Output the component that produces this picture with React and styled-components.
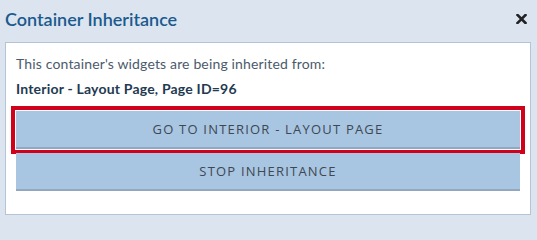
import React from 'react';
import styled, { createGlobalStyle } from 'styled-components';

const GlobalStyle = createGlobalStyle`
  html, body {
    margin: 0;
    padding: 0;
    background: #dbe4ef;
  }
  body {
    font-family: Lato, "Open Sans", sans-serif;
  }
`

const Dialog = styled.div`
  width: 537px;
  height: 221px;
  box-sizing: border-box;
  padding: 0 6px 0 5px;
  display: flex;
  flex-direction: column;
  background: #dbe4ef;
`

const Header = styled.div`
  height: 42px;
  display: flex;
  align-items: center;
  justify-content: space-between;
  padding-bottom: 4px;
  box-sizing: border-box;
`

const Title = styled.h2`
  margin: 0;
  font-family: Lato, sans-serif;
  font-size: 18px;
  font-weight: 600;
  color: #1b5a8e;
`

const Close = styled.button`
  border: 0;
  background: none;
  padding: 0;
  margin-right: 4px;
  width: 12px;
  height: 12px;
  display: flex;
  align-items: center;
  justify-content: center;
  cursor: pointer;
`

const Body = styled.div`
  background: #fff;
  border: 1px solid #b5c3d6;
  height: 173px;
  box-sizing: border-box;
  padding: 10px 10px 0 10px;
  display: flex;
  flex-direction: column;
`

const Note = styled.p`
  margin: 0;
  font-size: 14px;
  letter-spacing: 0.15px;
  line-height: 22px;
  color: #4b5b6c;
`

const Source = styled.p`
  margin: 3px 0 0 0;
  font-size: 14px;
  letter-spacing: 0.2px;
  line-height: 22px;
  font-weight: 700;
  color: #233a52;
`

const Button = styled.button`
  height: 38px;
  width: 100%;
  box-sizing: border-box;
  border: 0;
  border-bottom: 2px solid #93a8c0;
  background: #a8c5e2;
  font-family: "Open Sans", sans-serif;
  font-size: 13px;
  letter-spacing: 1.2px;
  color: #3e4852;
  cursor: pointer;
  outline: ${p => (p.$focused ? '4px solid #d0021b' : 'none')};
  outline-offset: 1px;
  margin-top: ${p => p.$gap}px;
`

const App = () => {
  return (
    <>
      <GlobalStyle />
      <Dialog>
        <Header>
          <Title>Container Inheritance</Title>
          <Close aria-label="close">
            <svg width="11" height="10" viewBox="0 0 11 10">
              <path d="M1.5 1 L9.5 9 M9.5 1 L1.5 9" stroke="#222" strokeWidth="2.6" strokeLinecap="square" />
            </svg>
          </Close>
        </Header>
        <Body>
          <Note>This container's widgets are being inherited from:</Note>
          <Source>Interior - Layout Page, Page ID=96</Source>
          <Button $focused $gap={11}>GO TO INTERIOR - LAYOUT PAGE</Button>
          <Button $gap={4}>STOP INHERITANCE</Button>
        </Body>
      </Dialog>
    </>
  )
}

export default App
